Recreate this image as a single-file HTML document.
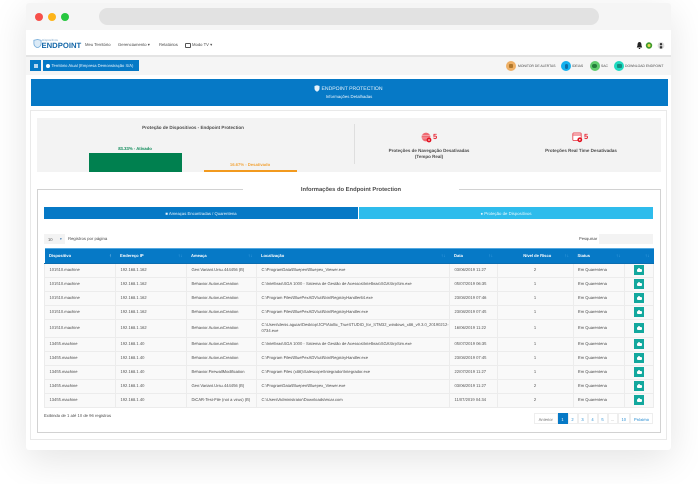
<!DOCTYPE html>
<html lang="pt"><head><meta charset="utf-8"><title>Endpoint Protection</title>
<style>
html,body{margin:0;padding:0;background:#fff;width:698px;height:484px;overflow:hidden}
body{font-family:"Liberation Sans",sans-serif;color:#4c4c4c;position:relative;text-rendering:geometricPrecision}
.a{position:absolute;white-space:nowrap}
.t{position:absolute;white-space:nowrap;line-height:8px;height:8px;transform:translateY(-4px)}
.c{transform:translate(-50%,-4px);text-align:center}
#win{position:absolute;left:26px;top:3px;width:645px;height:447px;background:#fff;box-shadow:0 10px 38px rgba(0,0,0,.11);border-radius:3px}
#wrap{position:absolute;left:0;top:0;width:698px;height:484px;filter:blur(.3px)}
table{position:absolute;left:44px;top:248px;width:609px;border-collapse:collapse;table-layout:fixed;font-size:4.100px;color:#4c4c4c}
th{background:#0679c6;color:#fff;font-weight:bold;text-align:left;height:14.500px;padding:0 0 0 4.500px;border:0;position:relative;border-top:1px solid #55a9e0;border-bottom:1px solid #0a6db0;box-sizing:border-box}
th i{position:absolute;right:4px;top:4px;font-style:normal;color:#4aa6e4;font-size:4.500px}
td{height:14px;padding:0 0 0 4.500px;border:.6px solid #ececec;box-sizing:border-box;background:#f9f9f9;line-height:5.600px;overflow:hidden;white-space:nowrap}
tr.tall td{height:18px}
tr.tall td.w{white-space:normal}
td.n{text-align:center;padding:0}
td b{display:block;width:10px;height:10px;background:#13a89e;margin:0 auto;position:relative}
td b:before{content:"";position:absolute;left:2.500px;top:3.600px;width:5px;height:3.600px;background:#fff;border-radius:1px}
td b:after{content:"";position:absolute;left:3.800px;top:2.600px;width:2.400px;height:1.400px;background:#fff;border-radius:1px 1px 0 0}
.pg{position:absolute;top:413px;height:11px;line-height:11px;font-size:4.100px;text-align:center;color:#1e88d0;background:#fff;border:.6px solid #eee;box-sizing:border-box}
.dot{position:absolute;width:10px;height:10px;border-radius:50%;top:61px}
</style></head>
<body>
<div id="win"></div>
<div id="wrap">
<!-- title bar -->
<div class="a" style="left:26px;top:3px;width:645px;height:27px;background:#f5f5f5;border-radius:3px 3px 0 0"></div>
<div class="a" style="left:35px;top:13px;width:8px;height:8px;border-radius:50%;background:#f7504a"></div>
<div class="a" style="left:48px;top:13px;width:8px;height:8px;border-radius:50%;background:#fdb419"></div>
<div class="a" style="left:61px;top:13px;width:8px;height:8px;border-radius:50%;background:#27c73f"></div>
<div class="a" style="left:99px;top:8px;width:500px;height:17px;border-radius:9px;background:#e2e2e2"></div>

<!-- nav -->
<svg class="a" style="left:33px;top:39px" width="9" height="9" viewBox="0 0 10 10"><path d="M1 1.500 5 .5 9 1.500V5C9 7.500 7 9 5 9.800 3 9 1 7.500 1 5Z" fill="#dcebf7" stroke="#7fb2dc" stroke-width="1"/></svg>
<div class="t" style="left:42px;top:40px;font-size:3px;color:#7da6c8">Dispositivos</div>
<div class="t" style="left:41.500px;top:45.500px;font-size:7.700px;font-weight:bold;color:#1467a8">ENDPOINT</div>
<div class="t" style="left:85px;top:45px;font-size:4.200px">Meu Território</div>
<div class="t" style="left:118px;top:45px;font-size:4.200px">Gerenciamento &#9662;</div>
<div class="t" style="left:159px;top:45px;font-size:4.200px">Relatórios</div>
<div class="a" style="left:185px;top:42.500px;width:4px;height:3px;border:1px solid #555;border-radius:1px"></div>
<div class="t" style="left:192px;top:45px;font-size:4.200px">Modo TV &#9662;</div>
<svg class="a" style="left:636px;top:41px" width="30" height="9" viewBox="0 0 30 9"><path d="M3.500 1C2 1 1.500 2.500 1.500 4.500L.8 6.500H6.200L5.500 4.500C5.500 2.500 5 1 3.500 1ZM2.800 7h1.400v1h-1.400Z" fill="#222"/><circle cx="13" cy="4.500" r="3.200" fill="#3f9a2e"/><circle cx="13" cy="4.500" r="1.500" fill="#e2dc50"/><circle cx="25" cy="4.500" r="3.400" fill="#dcdcdc"/><circle cx="25" cy="3.200" r="1.200" fill="#333"/><path d="M23.800 7.500V5.200H26.200V7.500Z" fill="#333"/></svg>

<!-- sub bar -->
<div class="a" style="left:26px;top:55px;width:645px;height:1.500px;background:#e4e4e4"></div>
<div class="a" style="left:26px;top:56.500px;width:645px;height:18px;background:#f5f5f5"></div>
<div class="a" style="left:30px;top:60px;width:11px;height:11px;background:#0679c6"></div>
<div class="a" style="left:33.500px;top:63.500px;width:4px;height:4px;background:#b9d7ee"></div>
<div class="a" style="left:43px;top:60px;width:96px;height:11px;background:#0679c6"></div>
<div class="a" style="left:46px;top:63.500px;width:4px;height:4px;border-radius:50%;background:#fff"></div>
<div class="t" style="left:51.500px;top:65.800px;font-size:4.100px;color:#e6f2fb">Território Atual (Empresa Demonstração S/A)</div>
<div class="dot" style="left:506px;background:#eeb066"></div><div class="a" style="left:509px;top:64px;width:4px;height:4px;background:#b0772c;border-radius:1px"></div>
<div class="t" style="left:518px;top:65.800px;font-size:3.400px">MONITOR DE ALERTAS</div>
<div class="dot" style="left:561px;background:#12b0ee"></div><div class="a" style="left:564.500px;top:63.500px;width:3px;height:5px;background:#0a6ea8;border-radius:1.500px"></div>
<div class="t" style="left:572px;top:65.800px;font-size:3.400px">IDEIAS</div>
<div class="dot" style="left:589.500px;background:#5fca6c"></div><div class="a" style="left:592px;top:64px;width:5px;height:4px;background:#237d3a;border-radius:2px"></div>
<div class="t" style="left:601px;top:65.800px;font-size:3.400px">SAC</div>
<div class="dot" style="left:614px;background:#1edac0"></div><div class="a" style="left:616.500px;top:64px;width:5px;height:4px;background:#138f80;border-radius:1px"></div>
<div class="t" style="left:625px;top:65.800px;font-size:3.400px">DOWNLOAD ENDPOINT</div>

<!-- banner -->
<div class="a" style="left:30.500px;top:79px;width:637px;height:27px;background:#0679c6"></div>
<svg class="a" style="left:314px;top:85px" width="6" height="7" viewBox="0 0 6 7"><path d="M.5 1 3 .2 5.500 1V3.500C5.500 5 4.500 6 3 6.800 1.500 6 .5 5 .5 3.500Z" fill="#e6f2fb"/></svg>
<div class="t" style="left:321.500px;top:88.500px;font-size:5.100px;color:#e6f2fb">ENDPOINT PROTECTION</div>
<div class="t c" style="left:349px;top:97px;font-size:4.300px;color:#e6f2fb">Informações Detalhadas</div>

<!-- panel -->
<div class="a" style="left:30px;top:110px;width:637px;height:329.500px;border:1px solid #e9e9e9;box-sizing:border-box;background:#fff"></div>
<div class="a" style="left:37px;top:118px;width:624px;height:54px;background:#f3f3f3"></div>
<div class="t c" style="left:193px;top:128px;font-size:4.550px;font-weight:bold">Proteção de Dispositivos - Endpoint Protection</div>
<div class="t c" style="left:135px;top:149.300px;font-size:4.250px;font-weight:bold;color:#0c8a58">83.33% - Ativado</div>
<div class="a" style="left:88.500px;top:153px;width:93px;height:19px;background:#00804f"></div>
<div class="t c" style="left:250px;top:165.300px;font-size:4.200px;font-weight:bold;color:#f2a53c">16.67% - Desativado</div>
<div class="a" style="left:204px;top:169.700px;width:93px;height:2.300px;background:#f29a1f"></div>
<div class="a" style="left:353.500px;top:124px;width:.8px;height:40px;background:#dedede"></div>
<svg class="a" style="left:421px;top:132px" width="11" height="11" viewBox="0 0 11 11"><circle cx="5" cy="5" r="4.400" fill="#ef6a72"/><path d="M.8 3.500H9.200M.8 6H9.200" stroke="#fbd5d7" stroke-width=".6"/><circle cx="8" cy="8" r="2.400" fill="#e2101f"/><circle cx="8" cy="8" r=".8" fill="#fff"/></svg>
<div class="t" style="left:433px;top:137px;font-size:7.500px;font-weight:bold;color:#e8202e">5</div>
<div class="t c" style="left:429px;top:151px;font-size:4.500px;font-weight:bold">Proteções de Navegação Desativadas</div>
<div class="t c" style="left:429px;top:157.300px;font-size:4.500px;font-weight:bold">(Tempo Real)</div>
<svg class="a" style="left:572px;top:132px" width="11" height="11" viewBox="0 0 11 11"><rect x=".8" y="1" width="8.400" height="7.600" rx="1" fill="#fff" stroke="#ea4a55" stroke-width=".9"/><path d="M.8 3H9.200" stroke="#ea4a55" stroke-width="1"/><circle cx="7.800" cy="7.800" r="2.400" fill="#e2101f"/><circle cx="7.800" cy="7.800" r=".8" fill="#fff"/></svg>
<div class="t" style="left:584px;top:137px;font-size:7.500px;font-weight:bold;color:#e8202e">5</div>
<div class="t c" style="left:581px;top:151px;font-size:4.500px;font-weight:bold">Proteções Real Time Desativadas</div>

<!-- fieldset -->
<div class="a" style="left:37px;top:189px;width:624px;height:243.500px;border:1px solid #d2d2d2;box-sizing:border-box"></div>
<div class="a" style="left:243px;top:186px;width:216px;height:6px;background:#fff"></div>
<div class="t c" style="left:351px;top:190.300px;font-size:5.800px;font-weight:bold">Informações do Endpoint Protection</div>
<div class="a" style="left:44px;top:207.300px;width:313.500px;height:11.500px;background:#0679c6"></div>
<div class="t c" style="left:201px;top:213.500px;font-size:4.200px;color:#e6f2fb">&#9632; Ameaças Encontradas / Quarentena</div>
<div class="a" style="left:359px;top:207.300px;width:293.500px;height:11.500px;background:#2ebcec"></div>
<div class="t c" style="left:506px;top:213.500px;font-size:4.300px;color:#e6f7fd">&#9679; Proteção de Dispositivos</div>

<div class="a" style="left:44px;top:234px;width:21px;height:10px;background:#f3f3f3"></div>
<div class="t" style="left:48px;top:239.500px;font-size:4.100px">10</div>
<div class="t" style="left:63px;top:239px;font-size:3.500px;color:#2d6ca8;transform:translate(-3px,-4px)">&#9662;</div>
<div class="t" style="left:68px;top:239.300px;font-size:4.250px">Registros por página</div>
<div class="t" style="left:579px;top:239.300px;font-size:4.100px">Pesquisar</div>
<div class="a" style="left:599px;top:234px;width:54px;height:10px;background:#f3f3f3"></div>

<table>
<colgroup><col style="width:71px"><col style="width:71px"><col style="width:70px"><col style="width:193px"><col style="width:47.500px"><col style="width:76px"><col style="width:51.500px"><col style="width:29px"></colgroup>
<tr><th>Dispositivo<i style="color:#cfe6f7">&#8593;</i></th><th>Endereço IP<i>&#8593;&#8595;</i></th><th>Ameaça<i>&#8593;&#8595;</i></th><th>Localização<i>&#8593;&#8595;</i></th><th>Data<i>&#8593;&#8595;</i></th><th style="text-align:center">Nível de Risco<i>&#8593;&#8595;</i></th><th>Status<i>&#8593;&#8595;</i></th><th><i>&#8593;&#8595;</i></th></tr>
<tr><td>101510.machine</td><td>192.168.1.162</td><td>Gen:Variant.Ursu.444456 (B)</td><td>C:\ProgramData\Bluepen\Bluepex_Viewer.exe</td><td>03/06/2019 11:27</td><td class="n">2</td><td>Em Quarentena</td><td class="n"><b></b></td></tr>
<tr><td>101510.machine</td><td>192.168.1.162</td><td>Behavior.AutorunCreation</td><td>C:\Intelbras\SGA 1000 - Sistema de Gestão de Acessos\Intelbras\SGAStrpSim.exe</td><td>05/07/2019 06:35</td><td class="n">1</td><td>Em Quarentena</td><td class="n"><b></b></td></tr>
<tr><td>101510.machine</td><td>192.168.1.162</td><td>Behavior.AutorunCreation</td><td>C:\Program Files\BluePexADV\util\bin\RegistryHandler64.exe</td><td>23/08/2019 07:46</td><td class="n">1</td><td>Em Quarentena</td><td class="n"><b></b></td></tr>
<tr><td>101510.machine</td><td>192.168.1.162</td><td>Behavior.AutorunCreation</td><td>C:\Program Files\BluePexADV\util\bin\RegistryHandler.exe</td><td>23/08/2019 07:45</td><td class="n">1</td><td>Em Quarentena</td><td class="n"><b></b></td></tr>
<tr class="tall"><td>101510.machine</td><td>192.168.1.162</td><td>Behavior.AutorunCreation</td><td class="w">C:\Users\denis.aguiar\Desktop\JCP\Atollic_TrueSTUDIO_for_STM32_windows_x86_v9.3.0_20190212-<br>0734.exe</td><td>16/06/2019 11:22</td><td class="n">1</td><td>Em Quarentena</td><td class="n"><b></b></td></tr>
<tr><td>13455.machine</td><td>192.168.1.40</td><td>Behavior.AutorunCreation</td><td>C:\Intelbras\SGA 1000 - Sistema de Gestão de Acessos\Intelbras\SGAStrpSim.exe</td><td>05/07/2019 06:35</td><td class="n">1</td><td>Em Quarentena</td><td class="n"><b></b></td></tr>
<tr><td>13455.machine</td><td>192.168.1.40</td><td>Behavior.AutorunCreation</td><td>C:\Program Files\BluePexADV\util\bin\RegistryHandler.exe</td><td>23/08/2019 07:45</td><td class="n">1</td><td>Em Quarentena</td><td class="n"><b></b></td></tr>
<tr><td>13455.machine</td><td>192.168.1.40</td><td>Behavior.FirewallModification</td><td>C:\Program Files (x86)\Salescope\Integrador\Integrador.exe</td><td>22/07/2019 11:27</td><td class="n">1</td><td>Em Quarentena</td><td class="n"><b></b></td></tr>
<tr><td>13455.machine</td><td>192.168.1.40</td><td>Gen:Variant.Ursu.444456 (B)</td><td>C:\ProgramData\Bluepen\Bluepex_Viewer.exe</td><td>03/06/2019 11:27</td><td class="n">2</td><td>Em Quarentena</td><td class="n"><b></b></td></tr>
<tr><td>13455.machine</td><td>192.168.1.40</td><td>DiCAR-Test-File (not a virus) (B)</td><td>C:\Users\Administrator\Downloads\eicar.com</td><td>11/07/2019 04:34</td><td class="n">2</td><td>Em Quarentena</td><td class="n"><b></b></td></tr>
</table>

<div class="t" style="left:44px;top:415.500px;font-size:4.200px">Exibindo de 1 até 10 de 96 registros</div>
<div class="pg" style="left:534px;width:23.500px;color:#777">Anterior</div>
<div class="pg" style="left:557.500px;width:10px;background:#0679c6;color:#fff;border-color:#0679c6">1</div>
<div class="pg" style="left:567.500px;width:10px">2</div>
<div class="pg" style="left:577.500px;width:10px">3</div>
<div class="pg" style="left:587.500px;width:10px">4</div>
<div class="pg" style="left:597.500px;width:10px">5</div>
<div class="pg" style="left:607.500px;width:10px;color:#777">...</div>
<div class="pg" style="left:617.500px;width:12.500px">10</div>
<div class="pg" style="left:630px;width:23px">Próximo</div>
</div>
</body></html>
